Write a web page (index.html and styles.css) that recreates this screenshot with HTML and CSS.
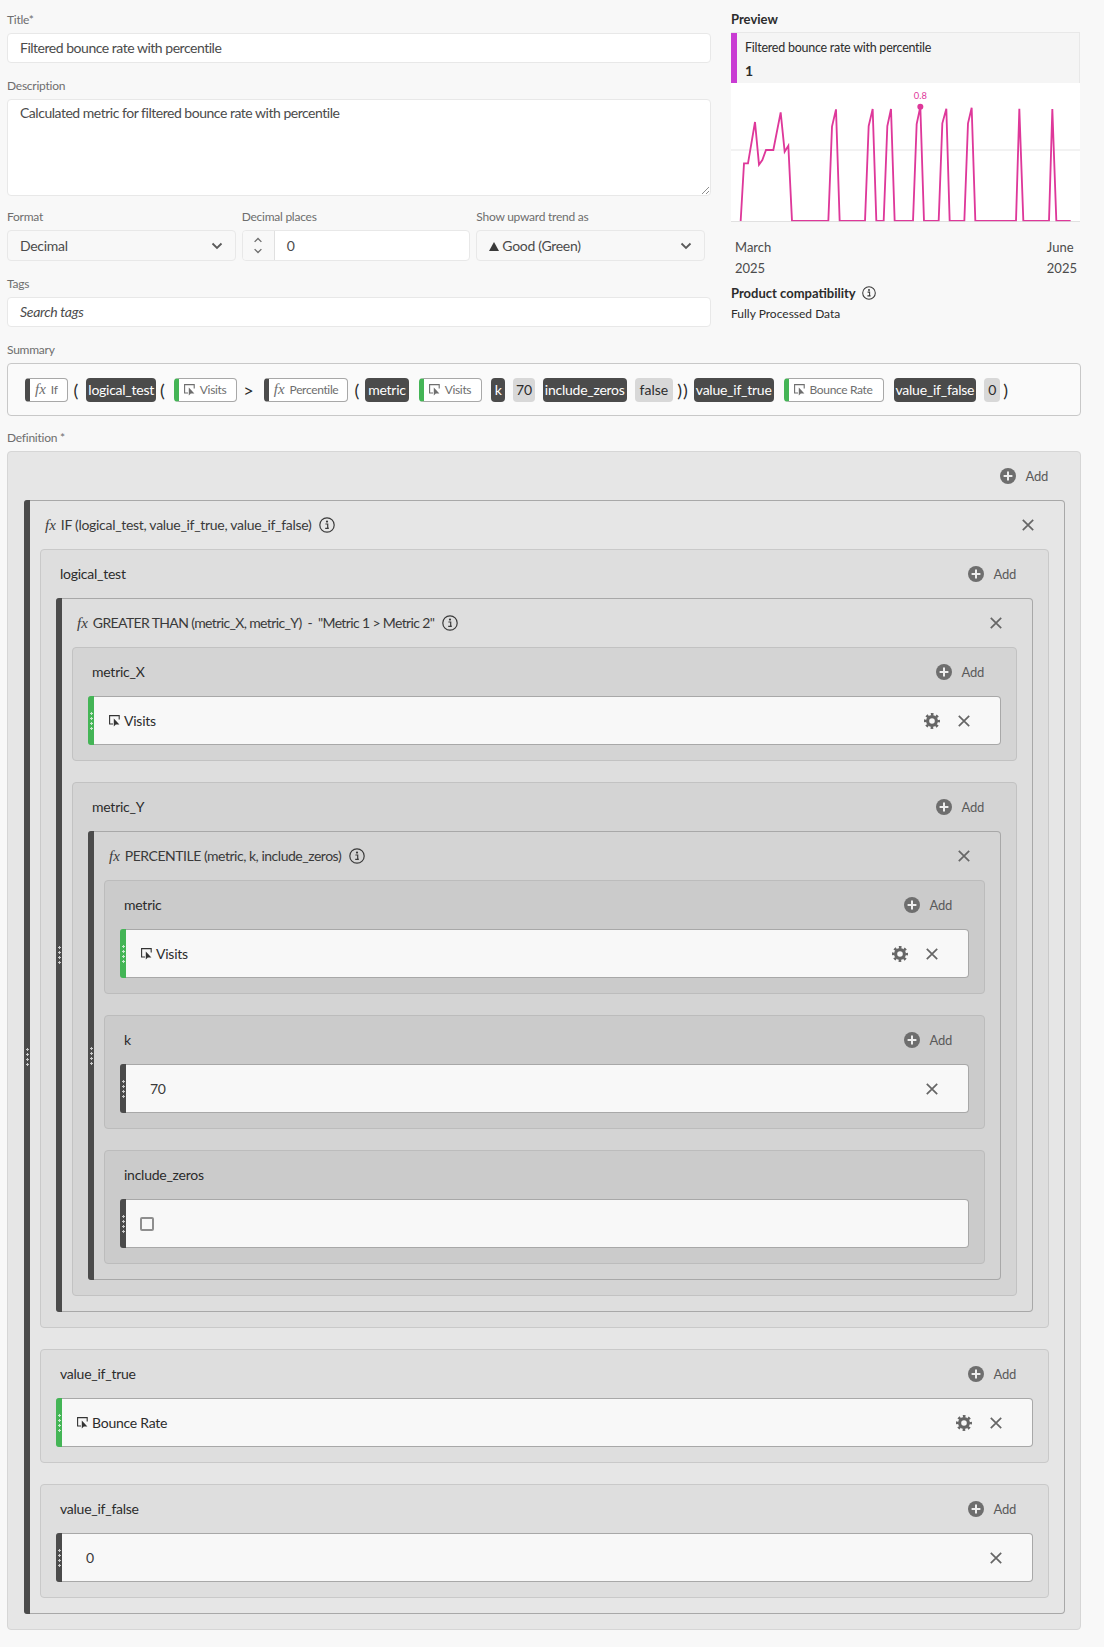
FILE: index.html
```html
<!DOCTYPE html>
<html lang="en">
<head>
<meta charset="utf-8">
<title>Calculated metric</title>
<link rel="stylesheet" href="styles.css">
</head>
<body>
<svg class="defs" width="0" height="0" aria-hidden="true">
  <symbol id="i-plus" viewBox="0 0 16 16"><circle cx="8" cy="8" r="8" fill="currentColor"/><path d="M8 3.6v8.8M3.6 8h8.8" stroke="#eee" stroke-width="2" fill="none"/></symbol>
  <symbol id="i-x" viewBox="0 0 12 12"><path d="M.8.8l10.4 10.4M11.2.8L.8 11.2" stroke="currentColor" stroke-width="1.7" fill="none"/></symbol>
  <symbol id="i-gear" viewBox="0 0 16 16"><circle cx="8" cy="8" r="4.4" fill="none" stroke="currentColor" stroke-width="3.2"/><circle cx="8" cy="8" r="6.7" fill="none" stroke="currentColor" stroke-width="2.6" stroke-dasharray="2.6 2.66" stroke-dashoffset="1.3"/></symbol>
  <symbol id="i-info" viewBox="0 0 16 16"><circle cx="8" cy="8" r="7.2" fill="none" stroke="currentColor" stroke-width="1.2"/><circle cx="8" cy="4.6" r="1.1" fill="currentColor"/><path d="M6.4 7h2.3v4.2h1M6.2 11.3h3.6" stroke="currentColor" stroke-width="1.2" fill="none"/></symbol>
  <symbol id="i-metric" viewBox="0 0 11 12"><path d="M4 9H.6V.6h9.6v4" stroke="currentColor" stroke-width="1.1" fill="none"/><path d="M4.8 3.6v8l2-2h3.6z" fill="currentColor"/></symbol>
  <symbol id="i-chev" viewBox="0 0 12 8"><path d="M1.5 1.5L6 6l4.5-4.5" stroke="currentColor" stroke-width="1.8" fill="none"/></symbol>
</svg>
<main class="page">
  <div class="top">
    <div class="form">
      <div class="field">
        <div class="label">Title*</div>
        <div class="input text">Filtered bounce rate with percentile</div>
      </div>
      <div class="field">
        <div class="label">Description</div>
        <div class="input text textarea">Calculated metric for filtered bounce rate with percentile
          <svg class="resize" width="8" height="8" viewBox="0 0 8 8"><path d="M1 8l7-7M5 8l3-3" stroke="#8e8e8e" stroke-width="1"/></svg>
        </div>
      </div>
      <div class="field-row">
        <div class="field cell">
          <div class="label">Format</div>
          <div class="input select"><span>Decimal</span><svg class="chev" width="12" height="8"><use href="#i-chev"/></svg></div>
        </div>
        <div class="field cell">
          <div class="label">Decimal places</div>
          <div class="input stepper">
            <span class="steps"><svg width="10" height="6" class="flip"><use href="#i-chev"/></svg><svg width="10" height="6"><use href="#i-chev"/></svg></span>
            <span class="step-value">0</span>
          </div>
        </div>
        <div class="field cell">
          <div class="label">Show upward trend as</div>
          <div class="input select"><span><i class="tri"></i>Good (Green)</span><svg class="chev" width="12" height="8"><use href="#i-chev"/></svg></div>
        </div>
      </div>
      <div class="field">
        <div class="label">Tags</div>
        <div class="input tags">Search tags</div>
      </div>
    </div>
    <aside class="preview">
      <div class="preview-title">Preview</div>
      <div class="card">
        <div class="card-head">
          <div class="card-name">Filtered bounce rate with percentile</div>
          <div class="card-value">1</div>
        </div>
        <svg class="chart" width="349" height="139" viewBox="33 249 1047 417">
          <path d="M33 450H1080" stroke="#eeeeee" stroke-width="4" fill="none"/>
          <path d="M62 663L72 490H84L105 366L117 494L127 480L138 450H160L182 337L194 455L205 437L216 663H325L336 380L348 328L359 663H435L446 378L458 327L469 663H491L502 378L513 327L524 663H579L590 372L601 320L612 663H656L667 370L679 326L689 663H733L744 370L755 323L766 663H888L898 326L910 663H987L997 327L1009 663H1052" stroke="#de389a" stroke-width="5.5" fill="none"/>
          <path d="M33 665H1080" stroke="#dcdcdc" stroke-width="3" fill="none"/>
          <circle cx="601" cy="320" r="9" fill="#de389a"/>
          <text class="peak" x="601" y="297" text-anchor="middle">0.8</text>
        </svg>
      </div>
      <div class="axis">
        <div>March<br>2025</div>
        <div>June<br>2025</div>
      </div>
      <div class="compat-title">Product compatibility <svg width="14" height="14"><use href="#i-info"/></svg></div>
      <div class="compat">Fully Processed Data</div>
    </aside>
  </div>

  <div class="field wide">
    <div class="label">Summary</div>
    <div class="summary">
      <span class="chip chip-fx"><i class="fx">fx</i>If</span>
      <span class="par lead">(</span>
      <span class="tag">logical_test</span>
      <span class="par">(</span>
      <span class="chip chip-m"><svg width="11" height="12"><use href="#i-metric"/></svg>Visits</span>
      <span class="par op">&gt;</span>
      <span class="chip chip-fx"><i class="fx">fx</i>Percentile</span>
      <span class="par">(</span>
      <span class="tag metric-tag">metric</span>
      <span class="chip chip-m"><svg width="11" height="12"><use href="#i-metric"/></svg>Visits</span>
      <span class="tag short">k</span>
      <span class="val tight">70</span>
      <span class="tag">include_zeros</span>
      <span class="val roomy">false</span>
      <span class="par dbl">))</span>
      <span class="tag">value_if_true</span>
      <span class="chip chip-m"><svg width="11" height="12"><use href="#i-metric"/></svg>Bounce Rate</span>
      <span class="tag">value_if_false</span>
      <span class="val">0</span>
      <span class="par last">)</span>
    </div>
  </div>

  <div class="field wide def">
    <div class="label">Definition *</div>
    <div class="canvas">
      <div class="head end"><span class="add"><svg width="16" height="16"><use href="#i-plus"/></svg>Add</span></div>
      <div class="box">
        <div class="bar"><i class="grip"></i></div>
        <div class="box-body">
          <div class="head"><i class="fx">fx</i><span class="fn">IF (logical_test, value_if_true, value_if_false)</span><svg class="info" width="16" height="16"><use href="#i-info"/></svg><svg class="close" width="12" height="12"><use href="#i-x"/></svg></div>
          <div class="stack">
            <section class="sec s1">
              <div class="head"><span class="name">logical_test</span><span class="add"><svg width="16" height="16"><use href="#i-plus"/></svg>Add</span></div>
              <div class="box b1">
                <div class="bar"><i class="grip"></i></div>
                <div class="box-body">
                  <div class="head"><i class="fx">fx</i><span class="fn caps-long">GREATER THAN (metric_X, metric_Y)&nbsp; -&nbsp; "Metric 1 &gt; Metric 2"</span><svg class="info" width="16" height="16"><use href="#i-info"/></svg><svg class="close" width="12" height="12"><use href="#i-x"/></svg></div>
                  <div class="stack">
                    <section class="sec s2">
                      <div class="head"><span class="name">metric_X</span><span class="add"><svg width="16" height="16"><use href="#i-plus"/></svg>Add</span></div>
                      <div class="row">
                        <div class="bar green"><i class="grip"></i></div>
                        <div class="row-body"><svg class="m" width="11" height="12"><use href="#i-metric"/></svg><span class="grow">Visits</span><svg class="gear" width="16" height="16"><use href="#i-gear"/></svg><svg class="close" width="12" height="12"><use href="#i-x"/></svg></div>
                      </div>
                    </section>
                    <section class="sec s2">
                      <div class="head"><span class="name">metric_Y</span><span class="add"><svg width="16" height="16"><use href="#i-plus"/></svg>Add</span></div>
                      <div class="box b2">
                        <div class="bar"><i class="grip"></i></div>
                        <div class="box-body">
                          <div class="head"><i class="fx">fx</i><span class="fn caps">PERCENTILE (metric, k, include_zeros)</span><svg class="info" width="16" height="16"><use href="#i-info"/></svg><svg class="close" width="12" height="12"><use href="#i-x"/></svg></div>
                          <div class="stack">
                            <section class="sec s3">
                              <div class="head"><span class="name">metric</span><span class="add"><svg width="16" height="16"><use href="#i-plus"/></svg>Add</span></div>
                              <div class="row">
                                <div class="bar green"><i class="grip"></i></div>
                                <div class="row-body"><svg class="m" width="11" height="12"><use href="#i-metric"/></svg><span class="grow">Visits</span><svg class="gear" width="16" height="16"><use href="#i-gear"/></svg><svg class="close" width="12" height="12"><use href="#i-x"/></svg></div>
                              </div>
                            </section>
                            <section class="sec s3">
                              <div class="head"><span class="name">k</span><span class="add"><svg width="16" height="16"><use href="#i-plus"/></svg>Add</span></div>
                              <div class="row">
                                <div class="bar"><i class="grip"></i></div>
                                <div class="row-body value"><span class="grow">70</span><svg class="close" width="12" height="12"><use href="#i-x"/></svg></div>
                              </div>
                            </section>
                            <section class="sec s3">
                              <div class="head"><span class="name">include_zeros</span></div>
                              <div class="row">
                                <div class="bar"><i class="grip"></i></div>
                                <div class="row-body check"><i class="checkbox"></i></div>
                              </div>
                            </section>
                          </div>
                        </div>
                      </div>
                    </section>
                  </div>
                </div>
              </div>
            </section>
            <section class="sec s1">
              <div class="head"><span class="name">value_if_true</span><span class="add"><svg width="16" height="16"><use href="#i-plus"/></svg>Add</span></div>
              <div class="row">
                <div class="bar green"><i class="grip"></i></div>
                <div class="row-body"><svg class="m" width="11" height="12"><use href="#i-metric"/></svg><span class="grow">Bounce Rate</span><svg class="gear" width="16" height="16"><use href="#i-gear"/></svg><svg class="close" width="12" height="12"><use href="#i-x"/></svg></div>
              </div>
            </section>
            <section class="sec s1">
              <div class="head"><span class="name">value_if_false</span><span class="add"><svg width="16" height="16"><use href="#i-plus"/></svg>Add</span></div>
              <div class="row">
                <div class="bar"><i class="grip"></i></div>
                <div class="row-body value"><span class="grow">0</span><svg class="close" width="12" height="12"><use href="#i-x"/></svg></div>
              </div>
            </section>
          </div>
        </div>
      </div>
    </div>
  </div>
</main>
</body>
</html>
```
FILE: styles.css
```css
* { box-sizing: border-box; }
html, body { margin: 0; background: #f8f8f8; }
body { font-family: Lato, "Open Sans", sans-serif; font-size: 14px; color: #2c2c2c; }
.defs { position: absolute; }
.page { padding: 12px 0 17px 7px; height: 1647px; overflow: hidden; }

.top { display: flex; gap: 20px; }
.form { width: 704px; display: flex; flex-direction: column; gap: 15px; }
.field-row { display: flex; gap: 6px; width: 698px; margin-top: -2px; }
.cell { flex: 1 1 0; }
.label { font-size: 12px; line-height: 16px; color: #6e6e6e; margin-bottom: 5px; letter-spacing: -.25px; }
.input { height: 30px; background: #fff; border: 1px solid #e8e8e8; border-radius: 4px; padding: 0 12px 2px; display: flex; align-items: center; color: #4b4b4b; letter-spacing: -.3px; }
.text { letter-spacing: -.48px; }
.textarea { height: 97px; align-items: flex-start; padding-top: 4px; position: relative; }
.resize { position: absolute; right: 1px; bottom: 1px; }
.select { height: 31px; background: #f8f8f8; justify-content: space-between; padding-bottom: 0; }
.select .chev { color: #5a5a5a; }
.stepper { height: 31px; padding: 0; }
.steps { width: 32px; align-self: stretch; background: #f8f8f8; border-right: 1px solid #e0e0e0; border-radius: 4px 0 0 4px; display: flex; flex-direction: column; justify-content: center; align-items: center; gap: 5px; color: #6e6e6e; }
.flip { transform: rotate(180deg); }
.step-value { padding-left: 12px; }
.tri { display: inline-block; width: 0; height: 0; border-left: 5px solid transparent; border-right: 5px solid transparent; border-bottom: 9px solid #3a3a3a; margin-right: 3px; }
.tags { font-style: italic; }

.preview { width: 349px; margin-top: -1px; color: #2c2c2c; }
.preview-title { font-size: 13px; font-weight: 700; line-height: 16px; margin-bottom: 5px; }
.card { border: 1px solid #e8e8e8; border-width: 1px 1px 0 0; }
.card-head { height: 50px; background: #f5f5f5; border-left: 6px solid #c93bd3; padding: 6px 0 0 8px; }
.card-name { font-size: 12.5px; line-height: 18px; letter-spacing: -.25px; }
.card-value { font-size: 14px; font-weight: 700; line-height: 22px; margin-top: 3px; }
.chart { display: block; background: #fff; }
.peak { font-family: Lato, sans-serif; font-size: 28px; fill: #e0359b; }
.axis { display: flex; justify-content: space-between; padding: 15px 3px 0 4px; font-size: 13px; line-height: 21px; color: #4b4b4b; }
.compat-title { font-size: 13px; font-weight: 700; line-height: 16px; margin-top: 6px; display: flex; align-items: center; gap: 6px; }
.compat-title svg { color: #3a3a3a; }
.compat { font-size: 12px; line-height: 16px; margin-top: 5px; }

.wide { width: 1074px; margin-top: 15px; }
.def { margin-top: 14px; }
.summary { height: 53px; background: #fafafa; border: 1px solid #c8c8c8; border-radius: 4px; padding-left: 17px; display: flex; align-items: center; gap: 10px; }
.par { font-size: 18px; line-height: 24px; color: #2c2c2c; margin: 0 -4px; }
.par + .chip-m { margin-left: 3px; }
.lead { margin-right: -2px; }
.tag + .par { margin-left: -6px; }
.op { margin: 0 0 0 -4px; }
.dbl { margin: 0 -5px 0 -6px; letter-spacing: 1px; }
.last { margin-left: -7px; }
.chip, .tag, .val { height: 24px; border-radius: 4px; display: inline-flex; align-items: center; white-space: nowrap; letter-spacing: -.25px; }
.tag { background: #4b4b4b; color: #fff; padding: 0 2px; }
.metric-tag { padding: 0 3px; }
.short { padding: 0 3.5px; margin-left: -1px; }
.val { background: #d8d8d8; color: #2c2c2c; padding: 0 4px; }
.tight { padding: 0 3px; }
.roomy { padding: 0 5px; letter-spacing: 0; }
.tag + .val, .val + .tag { margin-left: -2px; }
.chip { background: #fff; border: 1px solid #a8a8a8; color: #6e6e6e; font-size: 12px; padding: 0 10px 0 5px; gap: 5px; letter-spacing: -.35px; }
.chip svg { color: #6e6e6e; }
.chip-fx { border-left: 5px solid #4b4b4b; padding-right: 9px; }
.chip-m { border-left: 5px solid #44b556; }
.fx { font-family: "Liberation Serif", serif; font-style: italic; font-size: 15px; line-height: 1; color: #3a3a3a; letter-spacing: 0; }
.chip .fx { color: #6e6e6e; }

.canvas { height: 1179px; background: #e6e6e6; border: 1px solid #d6d6d6; border-radius: 4px; padding: 0 15px 15px 16px; }
.head { height: 48px; display: flex; align-items: center; letter-spacing: -.25px; }
.end { justify-content: flex-end; }
.add { display: inline-flex; align-items: center; gap: 10px; color: #5a5a5a; font-size: 13px; margin-left: auto; }
.add svg { color: #6e6e6e; }
.canvas > .head .add { margin-right: 17px; }
.box { display: flex; background: #e6e6e6; border: 1px solid #a8a8a8; border-left: 0; border-radius: 4px; }
.b1 { background: #dedede; }
.b2 { background: #d4d4d4; }
.bar { flex: 0 0 6px; background: #4b4b4b; border-radius: 3px 0 0 3px; margin: -1px 0; display: flex; align-items: center; justify-content: center; }
.green { background: #44b556; }
.grip { width: 3px; height: 18px; background: radial-gradient(circle at 1.5px 1.5px, rgba(255,255,255,.7) 1.1px, transparent 1.4px) 0 0 / 3px 5px; }
.box-body { flex: 1; min-width: 0; padding: 0 15px 15px 10px; }
.box-body > .head { padding: 0 0 0 5px; }
.box-body > .head .fx { margin-right: 5px; }
.fn { color: #3a3a3a; margin-top: -2px; letter-spacing: -.3px; }
.caps { letter-spacing: -.48px; }
.caps-long { letter-spacing: -.63px; }
.info { margin-left: 8px; color: #3a3a3a; }
.close { color: #666; }
.box-body > .head .close { margin-left: auto; margin-right: 15px; }
.stack { display: flex; flex-direction: column; gap: 21px; }
.sec { border: 1px solid #c9c9c9; border-radius: 4px; padding: 0 15px 15px; }
.s1 { background: #dedede; }
.s2 { background: #d4d4d4; border-color: #c2c2c2; }
.s3 { background: #cbcbcb; border-color: #bcbcbc; }
.sec > .head { padding: 0 17px 0 4px; }
.name { color: #2c2c2c; margin-top: -2px; }
.row { height: 49px; display: flex; background: #f8f8f8; border: 1px solid #a8a8a8; border-left: 0; border-radius: 4px; }
.row-body { flex: 1; display: flex; align-items: center; padding: 0 30px 0 15px; letter-spacing: -.25px; }
.row-body .m { margin-right: 4px; color: #333; }
.grow { flex: 1; }
.gear { color: #666; margin-right: 18px; }
.value { padding-left: 24px; color: #3a3a3a; }
.check { padding-left: 14px; }
.checkbox { width: 14px; height: 14px; border: 2px solid #8e8e8e; border-radius: 2px; }
```
